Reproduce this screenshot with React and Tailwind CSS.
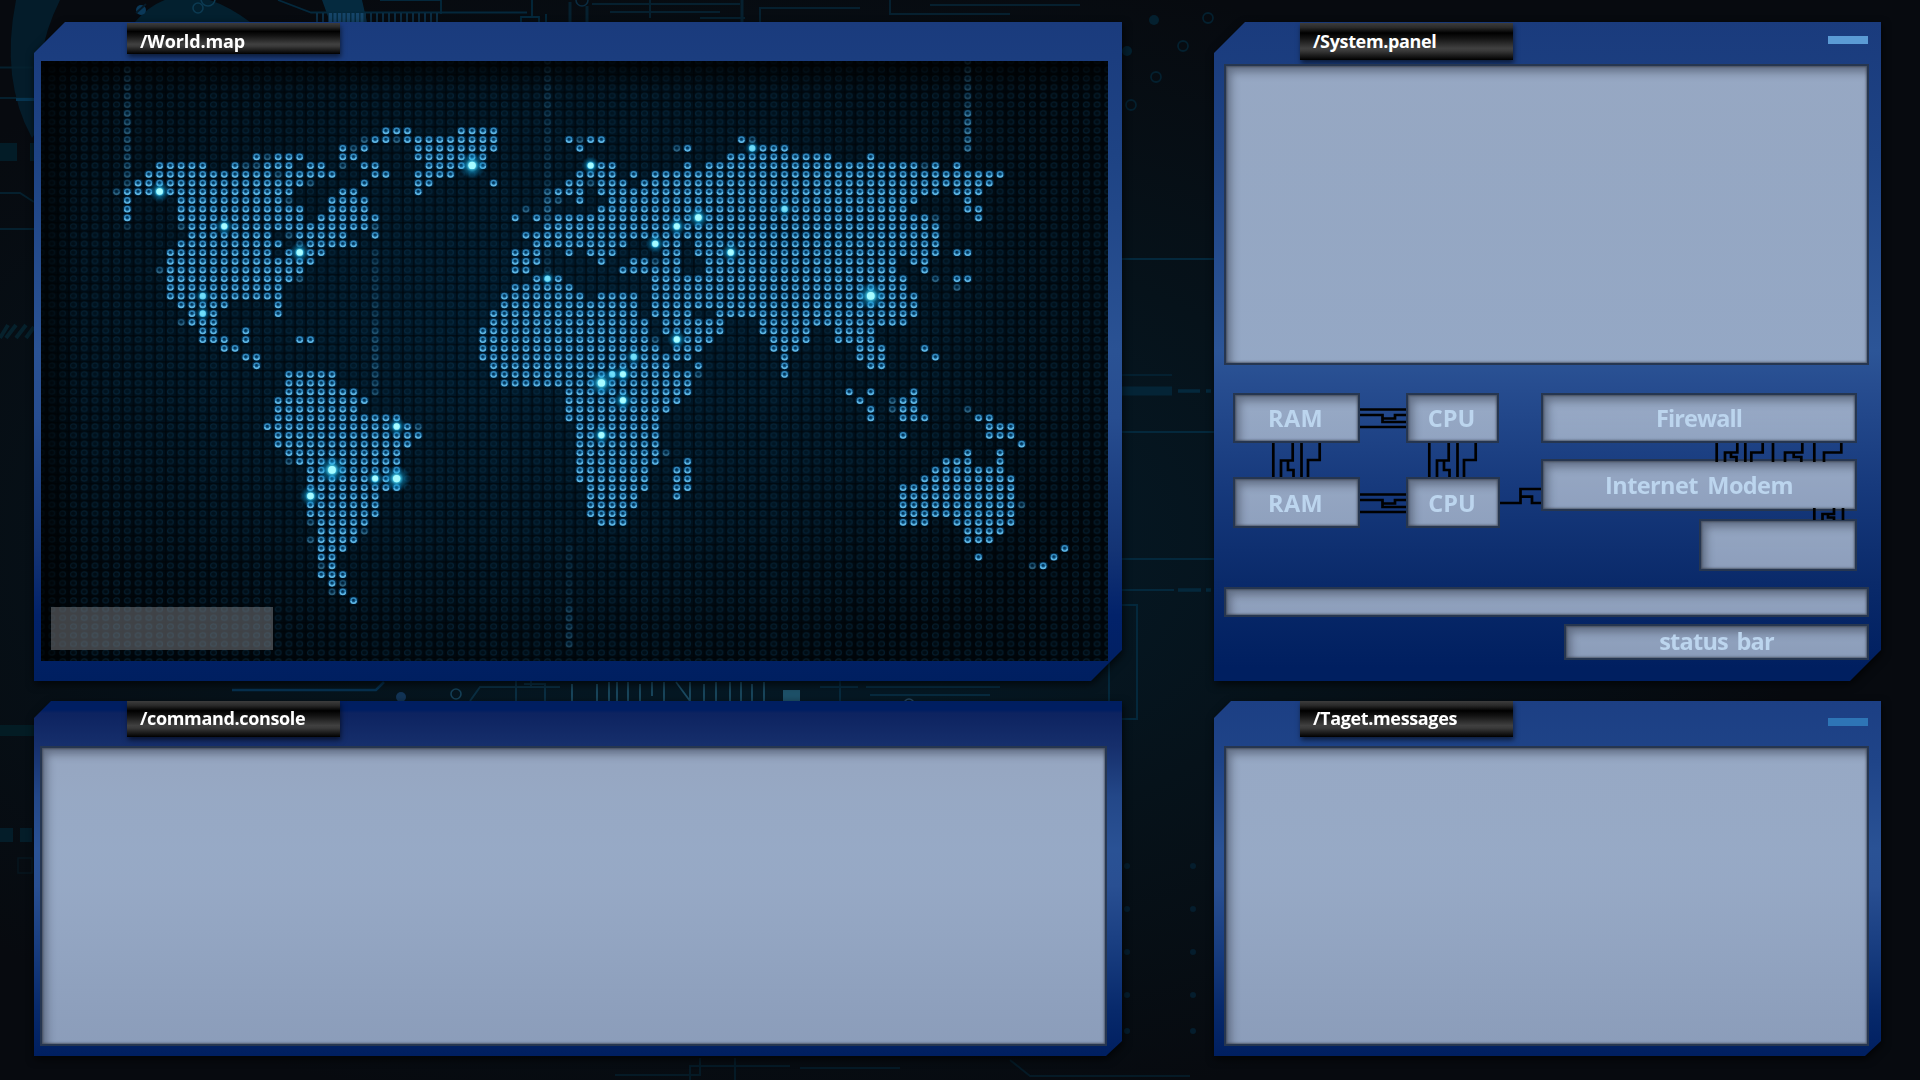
import React from "react";

const COL = 10.775;
const ROW = 8.7;
const X0 = 127.3 - 41;
const Y0 = 130.6 - 61;

// Lit cells of the dot map, one string per row: "from-to" column ranges.
const LAND = [
  "24-26 31-34",
  "23-24 26-34 41 43-44 57",
  "20 22 27-34 42 52 58-61",
  "12 14-16 20-21 27-33 56-65 69",
  "3-7 10 13-14 15-15 17-18 22-23 28-33 43-45 52 54-73 75 77",
  "2-13 15-19 23-24 27-30 42-45 47 49-81",
  "1-13 14-16 22 27-28 34 41-42 44-46 48-80",
  "0-15 20-21 27 40-42 44-75 77-79",
  "0 5-14 19-22 42 45-73 78",
  "0 5-16 19-22 44-72 78-79",
  "0 5-16 18-23 36 38 40-74 79",
  "6-22 39-75",
  "6-13 16-20 23 37-75",
  "5-14 17-21 38-46 49-51 53-75",
  "4-13 15-18 36-38 41 43-45 50-51 53-75 77-78",
  "4-17 36-38 44 47-48 50-51 54-71 73-74",
  "4-16 36-37 46-51 54-71 74",
  "4-15 38-40 49-72 77-78",
  "4-14 36-41 49-72",
  "4-14 35-42 44-47 49-73",
  "5-9 14 35-47 49-73",
  "6-8 14 34-47 49-52 55-73",
  "6-8 34-48 50-55 59-72",
  "7-8 11 33-48 50-55 59-63 66-69",
  "7-9 11 16-17 33-48 51-54 60-63 66-69",
  "9-10 33-49 51-53 60-62 68-70 74",
  "11-12 33-52 61 68-70 75",
  "12 34-50 53 61 69-70",
  "15-19 34-52 61",
  "15-19 35-52",
  "15-21 41-52 67 69 73",
  "14-22 41-51 68 72-73",
  "14-21 41-50 69 72-73",
  "14-25 41-49 69 72-74 79-80",
  "13-26 42-49 80-82",
  "14-27 42-49 72 80-82",
  "14-26 42-49 83",
  "15-25 42-49 78 81",
  "16-25 42-49 52 76-78 81",
  "17-25 42-48 51-52 75-81",
  "17-25 42-48 51-52 74-82",
  "17-25 43-48 51-52 72-82",
  "17-23 43-47 51 72-82",
  "17-23 43-47 72-82",
  "17-23 43-46 72-82",
  "18-22 44-46 72-74 77-82",
  "18-21 78-81",
  "18-21 78-80",
  "18-20 87",
  "18-19 79 86",
  "19 85",
  "18-20",
  "19",
  "20",
  "21",
];

// Half-lit cells: [row, columns].
const DIM = [
  [1, [22, 25, 42, 58]], [2, [21, 51]], [3, [13]], [4, [11, 12, 20, 74]], [5, [14]], [6, [17, 43]],
  [7, [-1, 39]], [8, [15, 39, 40]], [9, [37, 39]], [10, [39, 75]], [11, [5, 23]], [12, [15]], [13, [16]],
  [15, [49]], [16, [3]], [17, [16, 75]], [18, [77]], [22, [5]], [24, [49]], [28, [53]],
  [31, [71]], [32, [71, 78]], [34, [27]], [37, [50]], [38, [15]], [43, [83]], [45, [17]], [46, [22]], [47, [17]],
  [50, [18, 84]], [52, [20]], [53, [19]],
];

// Faint vertical trails: [column, first row, last row, opacity].
const TRAILS = [
  [0, -7, -3, 0.22], [0, -2, 6, 0.38], [0, 11, 11, 0.2], [23, 14, 22, 0.2], [23, 23, 30, 0.32],
  [39, -8, 16, 0.16], [78, -8, -3, 0.28], [78, -2, 2, 0.6], [41, 48, 54, 0.1], [41, 55, 59, 0.25],
];

// Glowing cells: [column, row, strength].
const GLOWS = [
  [32, 4, 2], [3, 7, 1.4], [9, 11, 1], [16, 14, 1.3], [7, 19, 0.8], [7, 21, 0.8], [43, 4, 1], [58, 2, 0.8],
  [61, 9, 0.8], [53, 10, 1.4], [51, 11, 1.1], [49, 13, 1.1], [56, 14, 1.1], [39, 17, 0.7], [51, 24, 1.1],
  [47, 26, 0.9], [45, 28, 0.8], [46, 28, 1], [44, 29, 2], [46, 31, 1.1], [44, 35, 1.1], [69, 19, 2.2],
  [25, 34, 1.1], [19, 39, 2.2], [25, 40, 2], [23, 40, 1], [17, 42, 1.4],
];

const px = (c) => X0 + c * COL;
const py = (r) => Y0 + r * ROW;

function Dot({ c, r, o = 1 }) {
  return <use href="#dot" x={px(c)} y={py(r)} opacity={o} />;
}

function WorldMap() {
  const lit = LAND.flatMap((line, r) =>
    line.split(" ").flatMap((part) => {
      const [a, b = a] = part.split("-").map(Number);
      return Array.from({ length: b - a + 1 }, (_, i) => [a + i, r]);
    })
  );
  return (
    <svg className="block h-[600px] w-[1067px]" viewBox="0 0 1067 600">
      <defs>
        <radialGradient id="sea" cx="47%" cy="45%" r="60%">
          <stop offset="0" stopColor="#001a2c" />
          <stop offset="0.6" stopColor="#00111d" />
          <stop offset="1" stopColor="#00060b" />
        </radialGradient>
        <radialGradient id="glow">
          <stop offset="0" stopColor="#c8ffff" />
          <stop offset="0.22" stopColor="#5fe6ff" stopOpacity="0.95" />
          <stop offset="0.5" stopColor="#10a5e0" stopOpacity="0.45" />
          <stop offset="1" stopColor="#0080c0" stopOpacity="0" />
        </radialGradient>
        <linearGradient id="topShade" x1="0" y1="0" x2="0" y2="1">
          <stop offset="0" stopColor="#000" stopOpacity="0.75" />
          <stop offset="1" stopColor="#000" stopOpacity="0" />
        </linearGradient>
        <linearGradient id="leftShade">
          <stop offset="0" stopColor="#000" stopOpacity="0.7" />
          <stop offset="1" stopColor="#000" stopOpacity="0" />
        </linearGradient>
        <pattern id="cells" width={COL} height={ROW} patternUnits="userSpaceOnUse" x={X0 - COL / 2} y={Y0 - ROW / 2}>
          <rect width={COL} height="1.6" fill="#000408" opacity="0.55" />
          <rect width="1.8" height={ROW} fill="#000408" opacity="0.5" />
          <ellipse cx={COL / 2} cy={ROW / 2} rx="2.9" ry="2.5" fill="#052a40" fillOpacity="0.35" stroke="#0b3a58" strokeWidth="1.2" opacity="0.4" />
        </pattern>
        <g id="dot">
          <rect x="-4.6" y="-3.9" width="9.2" height="7.8" rx="3.4" fill="#064a7c" opacity="0.42" />
          <ellipse rx="2.6" ry="2.35" fill="#0c4a75" stroke="#3288bd" strokeWidth="1.5" />
          <path d="M-2.600 .6A2.600 2.350 0 0 0 2.600 .6" fill="none" stroke="#62b8e4" strokeWidth="1.4" />
          <circle cx="-.2" cy="-.4" r=".9" fill="#04304f" />
        </g>
      </defs>
      <rect width="1067" height="600" fill="url(#sea)" />
      <rect width="1067" height="600" fill="url(#cells)" />
      {TRAILS.flatMap(([c, a, b, o]) =>
        Array.from({ length: b - a + 1 }, (_, i) => <Dot key={`t${c},${a + i}`} c={c} r={a + i} o={o} />)
      )}
      {lit.map(([c, r]) => <Dot key={`${c},${r}`} c={c} r={r} />)}
      {DIM.flatMap(([r, cs]) => cs.map((c) => <Dot key={`d${c},${r}`} c={c} r={r} o={0.45} />))}
      {GLOWS.map(([c, r, s]) => (
        <g key={`g${c},${r}`}>
          <circle cx={px(c)} cy={py(r)} r={4.5 + 4.5 * s} fill="url(#glow)" opacity={s < 1 ? 0.75 : 1} />
          <circle cx={px(c)} cy={py(r)} r={2.3 + 0.7 * s} fill={s < 1 ? "#6fdcf8" : "#a5fbff"} />
        </g>
      ))}
      <rect width="1067" height="30" fill="url(#topShade)" />
      <rect width="40" height="600" fill="url(#leftShade)" />
    </svg>
  );
}

function Backdrop() {
  const a = "#04283c";
  return (
    <svg className="absolute inset-0 h-[1080px] w-[1920px]" viewBox="0 0 1920 1080" fill="none">
      <defs>
        <radialGradient id="bgGlow" cx="40%" cy="50%" r="55%">
          <stop offset="0" stopColor="#041d2c" />
          <stop offset="0.55" stopColor="#06121a" />
          <stop offset="1" stopColor="#070a0f" />
        </radialGradient>
      </defs>
      <rect width="1920" height="1080" fill="url(#bgGlow)" />
      {/* large ring in the top left corner */}
      <path d="M16 0Q0 80 32 138L44 120Q30 60 60 0Z" fill="#041c2a" />
      <path d="M135 22Q180-30 250 22Z" fill="#03202f" />
      <path d="M322 0H362L367 22H330Z" fill="#052a3f" />
      <circle cx="141" cy="10" r="5" fill="#0a3858" />
      <path d="M136 13L146 4" stroke="#061a28" strokeWidth="2" />
      <circle cx="198" cy="8" r="5" stroke="#0c3a52" strokeWidth="1.6" />
      <circle cx="208" cy="-1" r="7" stroke="#0c3a52" strokeWidth="1.6" />
      <path d="M278 0L311 12.500H527M441 0V14M380 0H441M532 0V16M521 22V17H539V22M546 14V22" stroke={a} strokeWidth="1.800" />
      <circle cx="582" cy="0" r="6" stroke="#0a2b40" strokeWidth="1.600" />
      <path d="M316 17.500H440" stroke="#0b2c42" strokeWidth="9" strokeDasharray="2 4" />
      <path d="M329 17.500H365" stroke="#154468" strokeWidth="9" strokeDasharray="3 1.500" />
      <path d="M592 4H740M610 12H720M650 0V18M760 22V8H860M890 0V14H1010M700 18H745M930 5H1080" stroke="#06202f" strokeWidth="2" />
      <path d="M570 2V22M587 6V22M742 0V22" stroke="#06202f" strokeWidth="3" />
      {/* left margin */}
      <path d="M0 67.500H33M0 98H33M0 193H20L34 202M0 229H34" stroke="#05202e" strokeWidth="2" />
      <path d="M16 99.500H34" stroke="#063450" strokeWidth="3" />
      <path d="M0 143H17V161H0ZM30 143H34V161H30Z" fill="#031c27" />
      <path d="M0 338L8 325M6 338L16 325M16 338L26 325M26 338L34 327" stroke="#06212c" strokeWidth="4" />
      <path d="M0 725H34V736H0Z" fill="#031c24" />
      <path d="M0 828H13V842H0ZM20 828H32V842H20Z" fill="#041d29" />
      <rect x="18" y="858" width="14" height="15" stroke="#07161f" strokeWidth="1.500" />
      {/* top right of the map panel */}
      <circle cx="1154" cy="20" r="5" fill="#04202f" />
      <circle cx="1127" cy="51" r="5" fill="#04202f" />
      {[[1208, 18], [1183, 46], [1156, 77], [1131, 105]].map(([x, y]) => (
        <circle key={x} cx={x} cy={y} r="5" stroke="#04202f" strokeWidth="1.800" />
      ))}
      {/* gap between the two columns */}
      <path d="M1122 259H1214M1122 432H1214M1122 559H1214M1122 590H1174" stroke={a} strokeWidth="2.200" />
      <path d="M1122 391H1172" stroke="#042436" strokeWidth="9" />
      <path d="M1122 375H1172" stroke="#042030" strokeWidth="2" />
      <path d="M1178 391H1200M1206 391H1211M1178 590H1201M1206 590H1211" stroke={a} strokeWidth="3.500" />
      <path d="M1100 605H1137V719H1122M1109 660V702" stroke={a} strokeWidth="2" />
      {[866, 909, 952, 995, 1031].flatMap((y) => [
        <circle key={`a${y}`} cx="1127" cy={y} r="3" fill="#051d2d" />,
        <circle key={`b${y}`} cx="1193" cy={y} r="3" fill="#051d2d" />,
      ])}
      {/* strip between the rows */}
      <path d="M232 690H376L384 682" stroke="#063150" strokeWidth="2.500" />
      <circle cx="401" cy="697" r="5" fill="#123456" />
      <circle cx="456" cy="694" r="5" stroke="#154058" strokeWidth="1.600" />
      <circle cx="909" cy="704" r="5" stroke="#25455c" strokeWidth="1.600" />
      <path d="M470 701L480 687H560M516 681V701M524 684H545V701M531 681V687" stroke="#0a2e42" strokeWidth="2" />
      <path d="M572 701V684M597 684V701M609 682V701M617 682V701M628 682V701M640 684V701M652 682V696M664 682V701M676 682L690 701V682M704 684V701M716 682V701M730 682V701M741 682V701M752 684V701M764 682V701" stroke="#1b4a62" strokeWidth="1.800" />
      <path d="M783 690H800V701H783Z" fill="#1d5068" />
      <path d="M820 687H858M866 687H1000M870 695H990M840 681V701" stroke="#072a3e" strokeWidth="2" />
      {/* bottom margin */}
      <path d="M615 1075H700V1058M690 1080V1066H790M800 1068H900M735 1080V1058M1010 1060L1030 1076H1190" stroke="#051a26" strokeWidth="2" />
    </svg>
  );
}

function Tab({ children, className }) {
  return (
    <div className={`flex w-[213px] shrink-0 bg-[linear-gradient(180deg,#3c3c3c_0%,#2a2a2a_12%,#000_27%,#141414_42%,#404040_68%,#3a3a3a_75%,#0c0c0c_95%,#000_100%)] pl-[13px] font-['Open_Sans','Noto_Sans',sans-serif] text-[18px] leading-[36px] font-bold tracking-[-0.350px] text-white shadow-[1px_3px_5px_rgba(0,0,0,0.55)] ${className}`}>
      {children}
    </div>
  );
}

function Box({ children, className = "" }) {
  return (
    <div className={`flex shrink-0 items-center justify-center border-[2.500px] border-[#263650] bg-[linear-gradient(180deg,rgba(174,188,208,0.84),rgba(174,188,208,0.8))] font-['Open_Sans','Noto_Sans',sans-serif] text-[23.500px] leading-none font-bold whitespace-nowrap text-[#bcd5ee] shadow-[inset_0_0_2px_1px_rgba(50,55,65,0.6),inset_5px_6px_9px_rgba(50,58,75,0.5)] ${className}`}>
      {children}
    </div>
  );
}

function Panel({ className, children }) {
  return (
    <div className="[filter:drop-shadow(1px_3px_4px_rgba(0,0,0,0.7))]">
      <section className={`relative flex flex-col ${className}`}>{children}</section>
    </div>
  );
}

const wire = { fill: "none", stroke: "#000", strokeWidth: 2.7 };

function HWires({ className = "" }) {
  return (
    <svg className={`block h-[50px] w-[46px] shrink-0 ${className}`} viewBox="0 0 46 50" {...wire}>
      <path d="M0 16.500H46M0 34H46M0 22H22.500V29H46M22.500 25.500H35V22H46" />
    </svg>
  );
}

function VWires() {
  return (
    <svg className="block h-[34px] w-[40px] shrink-0 overflow-visible" viewBox="0 0 40 34" {...wire}>
      <path d="M1.300 0V34M20.700 0V17.500H9V34M16 17.500V27H21.500V34M29.500 0V34M47.700 0V17H36V34" />
    </svg>
  );
}

export default function App() {
  return (
    <main className="relative h-[1080px] w-[1920px] overflow-hidden bg-[#070b11]">
      <Backdrop />
      <div className="relative grid grid-cols-[1088px_667px] grid-rows-[659px_355px] gap-x-[92px] gap-y-[20px] pt-[22px] pl-[34px]">
        <Panel className="h-[659px] bg-[linear-gradient(180deg,#1a3b7d_0%,#1e4384_20%,#2a5294_50%,#274d90_60%,#143475_80%,#02226a_90%,#001f60_100%)] [clip-path:polygon(31px_0,100%_0,100%_628px,1057px_100%,0_100%,0_31px)]">
          <header className="flex h-[39px] pl-[93px]">
            <Tab className="mt-px h-[31px]"><span className="tracking-[-0.100px]">/World.map</span></Tab>
          </header>
          <div className="relative ml-[7px] h-[600px] w-[1067px]">
            <WorldMap />
            <div className="absolute top-[546px] left-[10px] h-[43px] w-[222px] bg-[#8c8f92]/45" />
          </div>
        </Panel>

        <Panel className="h-[659px] bg-[linear-gradient(180deg,#1a3b7d_0%,#1e4384_20%,#2c5597_50%,#274d90_55%,#173a7d_70%,#0a2a6a_85%,#001f60_98%)] [clip-path:polygon(31px_0,100%_0,100%_628px,636px_100%,0_100%,0_31px)]">
          <header className="flex h-[42px] items-start justify-between pr-[13px] pl-[86px]">
            <Tab className="mt-px h-[37px]"><span>/System.panel</span></Tab>
            <span className="mt-[14px] h-[8px] w-[40px] bg-[#5b9bd5]" />
          </header>
          <Box className="ml-[10px] h-[301px] w-[645px]" />
          <div className="mt-[28px] flex h-[178px] pl-[19px]">
            <div className="flex w-[267px] flex-col">
              <div className="flex">
                <Box className="h-[50px] w-[127px]"><span className="relative top-px -left-px tracking-[0.300px]">RAM</span></Box>
                <HWires />
                <Box className="h-[50px] w-[93px]"><span className="relative top-px -left-px">CPU</span></Box>
              </div>
              <div className="flex gap-[116px] pl-[39px]">
                <VWires />
                <VWires />
              </div>
              <div className="flex">
                <Box className="h-[51px] w-[127px]"><span className="relative top-px -left-px tracking-[0.300px]">RAM</span></Box>
                <HWires className="mt-px" />
                <Box className="h-[51px] w-[94px]"><span className="relative top-px -left-px">CPU</span></Box>
              </div>
            </div>
            <svg className="mt-[90px] block h-[30px] w-[41px] overflow-visible" viewBox="0 0 41 30" {...wire}>
              <path d="M0 20H20.500V6H41M20.500 13.700H32V20H41" />
            </svg>
            <div className="flex flex-col items-end">
              <Box className="h-[50px] w-[316px]"><span className="relative top-px tracking-[-0.900px]">Firewall</span></Box>
              <svg className="relative z-10 block h-[16px] w-[316px] overflow-visible" viewBox="0 0 316 16" {...wire}>
                <path d="M175.700 0V19M196.300 0V9.500H184V19M190 9.500V14H195.500V19M204.300 0V19M221.700 0V9.500H210.300V19M232 0V19M261.300 0V9.500H244V19M252.700 9.500V14H260.300V19M273.300 0V19M300.300 0V9.500H283V19" />
              </svg>
              <Box className="h-[52px] w-[316px]"><span className="relative top-px tracking-[-0.600px] [word-spacing:4px]">Internet Modem</span></Box>
              <svg className="relative z-10 block h-[8px] w-[316px] overflow-visible" viewBox="0 0 316 8" {...wire}>
                <path d="M273.300-3V9M293-3V3H281.500V9M287 3V6.500H293V9M302-3V9" />
              </svg>
              <Box className="h-[52px] w-[158px]" />
            </div>
          </div>
          <div className="mt-[16px] flex flex-col items-end gap-[7px] pr-[12px]">
            <Box className="h-[30px] w-[645px]" />
            <Box className="h-[36px] w-[305px]"><span className="relative tracking-[-0.750px] [word-spacing:3px]">status bar</span></Box>
          </div>
        </Panel>

        <Panel className="h-[355px] bg-[linear-gradient(180deg,#001e60_0px,#001e62_9px,#0d2360_12px,#162f6c_45px,#234788_95px,#2a5295_150px,#294f92_185px,#1a3f82_240px,#07296b_310px,#001f60_354px)] [clip-path:polygon(17px_0,100%_0,100%_340px,1072px_100%,0_100%,0_17px)]">
          <header className="flex h-[45px] pl-[93px]">
            <Tab className="h-[36px]"><span className="relative -top-px">/command.console</span></Tab>
          </header>
          <Box className="ml-[6px] h-[300px] w-[1067px]" />
        </Panel>

        <Panel className="h-[355px] bg-[linear-gradient(180deg,#1c3f84_0px,#1f4488_60px,#2a5295_150px,#294f92_185px,#1a3f82_240px,#07296b_310px,#001f60_354px)] [clip-path:polygon(17px_0,100%_0,100%_340px,651px_100%,0_100%,0_17px)]">
          <header className="flex h-[45px] items-start justify-between pr-[13px] pl-[86px]">
            <Tab className="h-[36px]"><span className="relative -top-px">/Taget.messages</span></Tab>
            <span className="mt-[17px] h-[8px] w-[40px] bg-[#2e75b6]" />
          </header>
          <Box className="ml-[10px] h-[300px] w-[645px]" />
        </Panel>
      </div>
    </main>
  );
}
